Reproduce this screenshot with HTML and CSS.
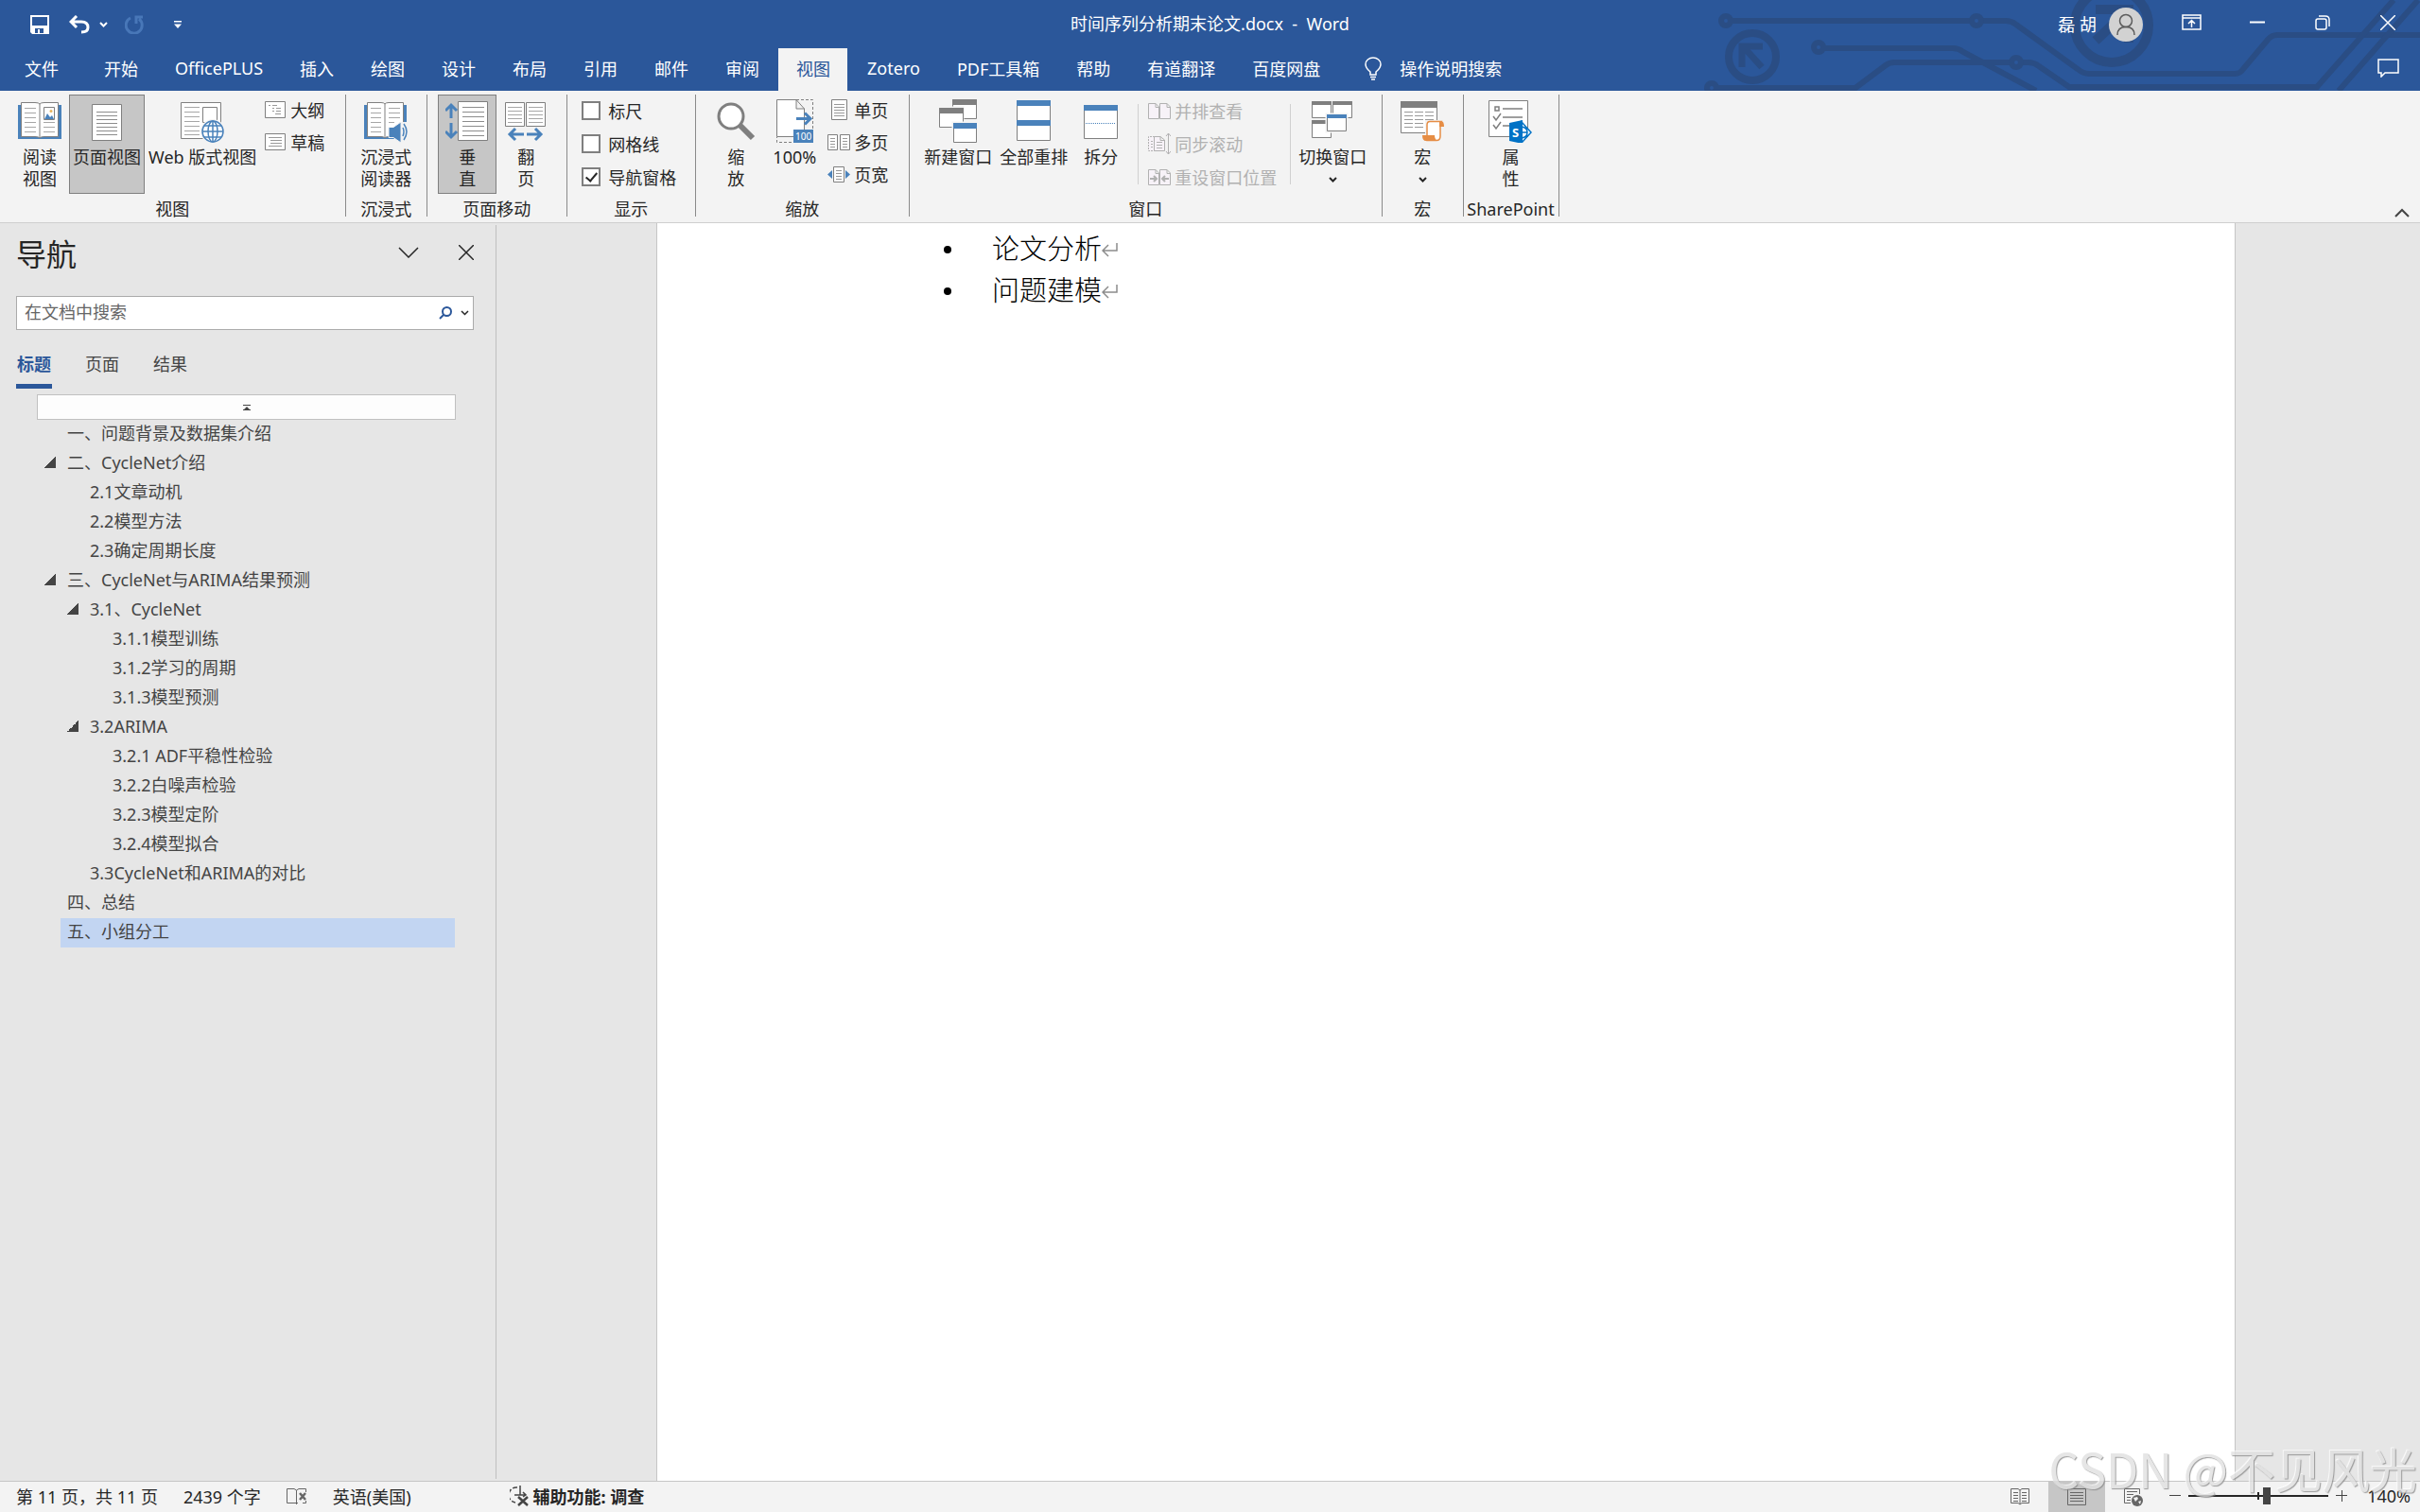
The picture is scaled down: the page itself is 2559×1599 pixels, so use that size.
FILE: index.html
```html
<!DOCTYPE html>
<html lang="zh-CN">
<head>
  <meta charset="utf-8">
  <title>时间序列分析期末论文.docx - Word</title>
  <link rel="stylesheet" href="styles.css">
</head>
<body>
  <header class="header">
    <svg class="circuit" width="760" height="96" viewBox="0 0 760 96" fill="none" stroke="#2a4d84" stroke-width="6">
      <circle cx="26" cy="22" r="5"/>
      <path d="M31 22H286M296 22H322Q328 22 333 26L398 73Q404 78 410 78H564Q570 78 573 73L599 42Q603 37 609 37H760"/>
      <circle cx="291" cy="22" r="5"/>
      <circle cx="54" cy="60" r="25" stroke-width="8"/>
      <path d="M43 71V49H65M45 50L64 71" stroke-width="7"/>
      <circle cx="124" cy="50" r="5"/>
      <path d="M129 51H266Q272 51 277 55L354 96"/>
      <circle cx="11" cy="93" r="5"/>
      <path d="M16 93H163L195 69Q199 66 204 66H328M339 66H346Q352 66 357 70L389 92H651L732 0M674 96L758 0"/>
      <circle cx="333" cy="66" r="5"/>
      <circle cx="434" cy="27" r="39" stroke-width="10"/>
      <path d="M417 10H452V45M450 12L417 43" stroke-width="10"/>
    </svg>

    <div class="titlebar">
      <div class="quick-access">
        <button title="保存"><svg width="20" height="20" viewBox="0 0 20 20"><path fill="#fff" fill-rule="evenodd" d="M0 0H20V20H2L0 18ZM2 2V11H18V2ZM5 14V19H8V15H10V19H14V14Z"/></svg></button>
        <button class="undo" title="撤消"><svg width="22" height="20" viewBox="0 0 22 20" fill="none" stroke="#fff" stroke-width="3"><path d="M8 1L2 7L8 13M3 7H13Q20 7 20 13Q20 18 13 18"/></svg></button>
        <button class="undo-more" title="更多"><svg width="9" height="6" viewBox="0 0 9 6" fill="none" stroke="#fff" stroke-width="2"><path d="M1 1L4.500 4.500L8 1"/></svg></button>
        <button class="redo" title="重复"><svg width="20" height="20" viewBox="0 0 20 20" fill="none" stroke="#4877b8" stroke-width="3"><path d="M6 3A8.500 8.500 0 1 0 15 4M12 9V2H19"/></svg></button>
        <button class="customize" title="自定义快速访问工具栏"><svg width="8" height="8" viewBox="0 0 8 8" fill="#fff"><path d="M0 0H8V1.500H0ZM0 3.500H8L4 8Z"/></svg></button>
      </div>
      <div class="doc-title">时间序列分析期末论文.docx&nbsp; -&nbsp; Word</div>
      <div class="window-controls">
        <span class="user">磊 胡</span>
        <svg class="avatar" width="36" height="36" viewBox="0 0 36 36" fill="none" stroke="#5c5c5c" stroke-width="1.500"><circle cx="18" cy="18" r="18" fill="#d2d2d2" stroke="none"/><circle cx="18" cy="14" r="6.500"/><path d="M9 29Q9 20.500 18 20.500T27 29"/></svg>
        <button class="display" title="功能区显示选项"><svg width="21" height="17" viewBox="0 0 21 17" fill="none" stroke="#fff" stroke-width="1.500"><path d="M1 1H20V16H1ZM1 4H20M10.500 14V7M7 10L10.500 6.500L14 10"/></svg></button>
        <button title="最小化"><svg width="16" height="16" viewBox="0 0 16 16"><path d="M0 7.500H16" stroke="#fff" stroke-width="2"/></svg></button>
        <button title="还原"><svg width="16" height="16" viewBox="0 0 16 16" fill="none" stroke="#fff" stroke-width="1.500"><rect x="1" y="4" width="11" height="11" rx="2"/><path d="M4 1H11Q15 1 15 5V12"/></svg></button>
        <button title="关闭"><svg width="16" height="16" viewBox="0 0 16 16"><path d="M0 0L16 16M16 0L0 16" stroke="#fff" stroke-width="1.500"/></svg></button>
      </div>
    </div>

    <nav class="tabs">
      <button class="file">文件</button>
      <button>开始</button>
      <button>OfficePLUS</button>
      <button>插入</button>
      <button>绘图</button>
      <button>设计</button>
      <button>布局</button>
      <button>引用</button>
      <button>邮件</button>
      <button>审阅</button>
      <button class="active">视图</button>
      <button>Zotero</button>
      <button>PDF工具箱</button>
      <button>帮助</button>
      <button>有道翻译</button>
      <button>百度网盘</button>
      <button class="tell-me"><svg width="18" height="25" viewBox="0 0 18 25" fill="none" stroke="#fff" stroke-width="1.500"><path d="M6 19V16Q1 12 1 8A8 7 0 0 1 17 8Q17 12 12 16V19ZM6 21.500H12M7 24H11"/></svg>操作说明搜索</button>
      <button class="comment" title="批注"><svg width="23" height="20" viewBox="0 0 23 20" fill="none" stroke="#fff" stroke-width="1.500"><path d="M1 1H22V15H8L4 19V15H1Z"/></svg></button>
    </nav>
  </header>

  <section class="ribbon">
    <div class="group">
      <div class="group-body">
        <button class="big"><svg viewBox="0 0 46 46"><path fill="#4a82bb" d="M0 6H46V42H0Z"/><path fill="#fff" stroke="#7f7f7f" d="M3.500 3.500H18Q22 3.500 23 5Q24 3.500 28 3.500H42.500V39.500H28Q24 39.500 23 41Q22 39.500 18 39.500H3.500ZM23 5V41"/><path stroke="#a6a6a6" d="M7 9.500H19M7 14.500H19M7 19.500H19M7 24.500H19M7 29.500H19M7 34.500H19M27 24.500H39M27 29.500H39M27 34.500H39"/><path fill="#fff" stroke="#7f7f7f" d="M27.500 8.500H38.500V21.500H27.500Z"/><path fill="#4a82bb" d="M28 21L31 15L34 19L36 17L38 21Z"/><circle cx="35" cy="12.500" r="1.500" fill="#e8b35a"/></svg>阅读<br>视图</button>
        <button class="big on"><svg viewBox="0 0 46 46"><path fill="#fff" stroke="#7f7f7f" d="M7.500 5.500H38.500V43.500H7.500Z"/><path stroke="#8c8c8c" d="M12 13.500H34M12 17.500H34M12 21.500H34M12 25.500H34M12 29.500H34M12 33.500H34M12 37.500H34"/></svg>页面视图</button>
        <button class="big"><svg viewBox="0 0 46 46"><path fill="#fff" stroke="#7f7f7f" d="M0.500 3.500H42.500V41.500H0.500Z"/><path stroke="#a6a6a6" d="M4 8.500H20M4 13.500H20M4 18.500H20M4 23.500H20M4 28.500H20M4 33.500H20M4 37.500H20"/><path fill="#fff" stroke="#7f7f7f" d="M23.500 8.500H38.500V24.500H23.500Z"/><circle cx="34" cy="34" r="13" fill="#f3f3f3"/><g fill="#fff" stroke="#4a82bb" stroke-width="1.500"><circle cx="34" cy="34" r="11"/><ellipse cx="34" cy="34" rx="5" ry="11"/><path d="M34 23V45M23 34H45M25 28H43M25 40H43"/></g></svg>Web 版式视图</button>
        <div class="small-col">
          <button class="small"><svg viewBox="0 0 24 24"><path fill="#fff" stroke="#7f7f7f" d="M1.500 3.500H22.500V20.500H1.500Z"/><path stroke="#999" d="M5 7.500H7M9 7.500H14M9 10.500H11M13 10.500H18M9 13.500H11M13 13.500H18M12 16.500H18"/></svg>大纲</button>
          <button class="small"><svg viewBox="0 0 24 24"><path fill="#fff" stroke="#7f7f7f" d="M1.500 3.500H22.500V20.500H1.500Z"/><path stroke="#999" d="M5 7.500H19M7 10.500H19M7 13.500H19M5 16.500H19"/></svg>草稿</button>
        </div>
      </div>
      <div class="group-label">视图</div>
    </div>

    <div class="group">
      <div class="group-body">
        <button class="big"><svg viewBox="0 0 46 46"><path fill="#4a82bb" d="M0 6H45V42H0Z"/><path fill="#fff" stroke="#7f7f7f" d="M3.500 3.500H18Q21 3.500 22 5Q23 3.500 26 3.500H41.500V39.500H26Q23 39.500 22 41Q21 39.500 18 39.500H3.500ZM22 5V41"/><path stroke="#a6a6a6" d="M7 9.500H18M7 14.500H18M7 19.500H18M7 24.500H18M7 29.500H18M7 34.500H18M26 9.500H38M26 14.500H38M26 19.500H38M26 24.500H32"/><path fill="#f3f3f3" d="M37 24H46V46H37Z"/><path fill="#4a82bb" stroke="#f3f3f3" d="M26 29.500H31L39 24V46L31 40.500H26Z"/><path fill="none" stroke="#4a82bb" stroke-width="1.500" d="M41 30Q43 34 41 39M42 26Q48 34 42 43"/></svg>沉浸式<br>阅读器</button>
      </div>
      <div class="group-label">沉浸式</div>
    </div>

    <div class="group">
      <div class="group-body">
        <button class="big on"><svg viewBox="0 0 46 46"><path fill="none" stroke="#4a82bb" stroke-width="3" d="M6 20V6M0 12L6 6L12 12M6 25V40M0 34L6 40L12 34"/><path fill="#fff" stroke="#7f7f7f" d="M13.500 2.500H44.500V43.500H13.500Z"/><path stroke="#8c8c8c" d="M18 8.500H41M18 13.500H41M18 18.500H41M18 23.500H41M18 28.500H41M18 33.500H41M18 38.500H41"/></svg>垂<br>直</button>
        <button class="big"><svg viewBox="0 0 46 46"><path fill="#fff" stroke="#7f7f7f" d="M1.500 3.500H21.500V28.500H1.500ZM23.500 3.500H43.500V28.500H23.500Z"/><path stroke="#a6a6a6" d="M4 8.500H19M4 12.500H19M4 16.500H19M4 20.500H19M4 24.500H19M26 8.500H41M26 12.500H41M26 16.500H41M26 20.500H41M26 24.500H41"/><path fill="none" stroke="#4a82bb" stroke-width="3" d="M21 37H6M12 31L6 37L12 43M24 37H39M33 31L39 37L33 43"/></svg>翻<br>页</button>
      </div>
      <div class="group-label">页面移动</div>
    </div>

    <div class="group">
      <div class="group-body">
        <div class="checks">
          <label><input type="checkbox">标尺</label>
          <label><input type="checkbox">网格线</label>
          <label><input type="checkbox" checked>导航窗格</label>
        </div>
      </div>
      <div class="group-label">显示</div>
    </div>

    <div class="group">
      <div class="group-body">
        <button class="big"><svg viewBox="0 0 46 46"><path stroke="#7f7f7f" stroke-width="6" d="M26 26L41 41"/><circle cx="18" cy="18" r="13" fill="#fff" stroke="#7f7f7f" stroke-width="3"/></svg>缩<br>放</button>
        <button class="big"><svg viewBox="0 0 46 46"><path fill="none" stroke="#7f7f7f" stroke-dasharray="3 2" d="M25 0.500H42.500V45.500H4.500V40"/><path fill="#fff" stroke="#7f7f7f" d="M4.500 0.500H25L33.500 10V39.500H4.500ZM25 0.500V10H33.500"/><path fill="none" stroke="#4a82bb" stroke-width="3" d="M25 20.500H40M34 14.500L40 20.500L34 26.500"/><path fill="#4a82bb" d="M22 32H43V46H22Z"/><text x="24" y="43" fill="#fff" font-size="10">100</text></svg>100%</button>
        <div class="small-col">
          <button class="small"><svg viewBox="0 0 24 24"><path fill="#fff" stroke="#7f7f7f" d="M4.500 1.500H20.500V22.500H4.500Z"/><path stroke="#999" d="M7 6.500H18M7 9.500H18M7 12.500H18M7 15.500H18M7 18.500H18"/></svg>单页</button>
          <button class="small"><svg viewBox="0 0 24 24"><path fill="#fff" stroke="#7f7f7f" d="M0.500 4.500H10.500V20.500H0.500ZM13.500 4.500H23.500V20.500H13.500Z"/><path stroke="#999" d="M3 8.500H8M3 11.500H8M3 14.500H8M3 17.500H8M16 8.500H21M16 11.500H21M16 14.500H21M16 17.500H21"/></svg>多页</button>
          <button class="small"><svg viewBox="0 0 24 24"><path fill="#fff" stroke="#7f7f7f" d="M6.500 4.500H17.500V20.500H6.500Z"/><path stroke="#999" d="M9 8.500H15M9 11.500H15M9 14.500H15M9 17.500H15"/><path fill="#4a82bb" d="M0 12.500L5 8V17ZM24 12.500L19 8V17Z"/></svg>页宽</button>
        </div>
      </div>
      <div class="group-label">缩放</div>
    </div>

    <div class="group">
      <div class="group-body">
        <button class="big"><svg viewBox="0 0 46 46"><g fill="#fff" stroke="#7f7f7f"><path d="M17.500 0.500H42.500V20.500H17.500Z"/><path fill="#7f7f7f" d="M17.500 0.500H42.500V5.500H17.500Z"/><path stroke="#f3f3f3" stroke-width="3" d="M3 9H28V30H3Z"/><path d="M3.500 9.500H28.500V29.500H3.500Z"/><path fill="#7f7f7f" d="M3.500 9.500H28.500V14.500H3.500Z"/><path stroke="#f3f3f3" stroke-width="3" d="M18 25H43V46H18Z"/><path d="M18.500 25.500H42.500V45.500H18.500Z"/></g><path fill="#4a82bb" d="M18 25H43V31H18Z"/></svg>新建窗口</button>
        <button class="big"><svg viewBox="0 0 46 46"><path fill="#fff" stroke="#7f7f7f" d="M5.500 1.500H40.500V43.500H5.500Z"/><path fill="#4a82bb" d="M5 1H41V7H5ZM5 22H41V28H5Z"/></svg>全部重排</button>
        <button class="big"><svg viewBox="0 0 46 46"><path fill="#fff" stroke="#7f7f7f" d="M5.500 6.500H40.500V41.500H5.500Z"/><path fill="#4a82bb" d="M5 6H41V12H5Z"/><path stroke="#4a82bb" stroke-dasharray="1 1" d="M7 25.500H39"/></svg>拆分</button>
        <div class="small-col tall ruled">
          <button class="small" disabled><svg viewBox="0 0 24 24" fill="#f7f2f8" stroke="#b1b1b1"><path d="M0.500 4.500H8L11.500 8V20.500H0.500ZM8 4.500V8.500H11.500M12.500 4.500H20L23.500 8V20.500H12.500ZM20 4.500V8.500H23.500"/></svg>并排查看</button>
          <button class="small" disabled><svg viewBox="0 0 24 24" fill="#f7f2f8" stroke="#b1b1b1"><path stroke-dasharray="2 1" d="M7 4.500H0.500V19.500H7M3 9.500H7M3 12.500H7M3 15.500H7"/><path d="M6.500 4.500H13L17.500 8V19.500H6.500ZM13 4.500V8.500H17.500M9 10.500H15M9 13.500H15M9 16.500H15M21.500 1V23M19 4L21.500 1L24 4M19 20L21.500 23L24 20"/></svg>同步滚动</button>
          <button class="small" disabled><svg viewBox="0 0 24 24" fill="#f7f2f8" stroke="#b1b1b1"><path d="M0.500 4.500H8L11.500 8V20.500H0.500ZM8 4.500V8.500H11.500M12.500 4.500H20L23.500 8V20.500H12.500ZM20 4.500V8.500H23.500"/><path fill="none" stroke-width="2" d="M2 14H9M6 11L9 14L6 17M22 14H15M18 11L15 14L18 17"/></svg>重设窗口位置</button>
        </div>
        <button class="big"><svg viewBox="0 0 46 46"><g fill="#fff" stroke="#7f7f7f"><path d="M1.500 2.500H21.500V19.500H1.500ZM23.500 2.500H43.500V19.500H23.500ZM1.500 22.500H21.500V40.500H1.500Z"/><path fill="#7f7f7f" d="M1.500 2.500H21.500V5.500H1.500ZM23.500 2.500H43.500V5.500H23.500ZM1.500 22.500H21.500V25.500H1.500Z"/><path stroke="#f3f3f3" stroke-width="3" d="M17 16H38V34H17Z"/><path d="M17.500 16.500H37.500V33.500H17.500Z"/></g><path fill="#4a82bb" d="M17 16H38V20H17Z"/></svg>切换窗口<svg class="caret" viewBox="0 0 9 6"><path fill="none" stroke="#262626" stroke-width="2" d="M1 1L4.500 4.500L8 1"/></svg></button>
      </div>
      <div class="group-label">窗口</div>
    </div>

    <div class="group">
      <div class="group-body">
        <button class="big"><svg viewBox="0 0 46 46"><path fill="#fff" stroke="#7f7f7f" d="M0.500 2.500H38.500V35.500H0.500Z"/><path fill="#7f7f7f" d="M0 2H39V9H0Z"/><path stroke="#999" stroke-dasharray="9 2" d="M4 13.500H35M4 17.500H35M4 21.500H35M4 25.500H35M4 29.500H35"/><path fill="#f3f3f3" d="M26 22H46V46H22V37H26Z"/><path fill="#fff" stroke="#e68d45" stroke-width="1.500" d="M28 39V27Q28 23.500 31 23.500H43Q42 25 42 28V39Q42 43.500 38 43.500H28Z"/><path fill="#e68d45" d="M41 23H43Q46 23 46 29H41ZM23 38H36Q36 42 39 44H27Q23 44 23 38Z"/></svg>宏<svg class="caret" viewBox="0 0 9 6"><path fill="none" stroke="#262626" stroke-width="2" d="M1 1L4.500 4.500L8 1"/></svg></button>
      </div>
      <div class="group-label">宏</div>
    </div>

    <div class="group sharepoint">
      <div class="group-body">
        <button class="big"><svg viewBox="0 0 46 46"><path fill="#fff" stroke="#7f7f7f" d="M0.500 1.500H41.500V39.500H0.500Z"/><path fill="none" stroke="#7f7f7f" stroke-width="1.500" d="M7 8H11V12H7ZM15 10H36M15 19H36M15 28H22M5 18L8 22L13 15M5 27L8 31L13 24"/><path fill="#fff" stroke="#0072c6" stroke-width="1.500" d="M35 24L45 35L35 46ZM35 29Q41 30 41 35Q41 40 35 41M35 35H41"/><path fill="#0072c6" d="M22 25L36 22V47L22 44Z"/><text x="25" y="40" fill="#fff" font-size="13" font-weight="bold">S</text></svg>属<br>性</button>
      </div>
      <div class="group-label">SharePoint</div>
    </div>
    <button class="collapse" title="折叠功能区"><svg width="16" height="10" viewBox="0 0 16 10"><path fill="none" stroke="#444" stroke-width="2" d="M1 9L8 2L15 9"/></svg></button>
  </section>

  <main class="workspace">
    <aside class="nav-pane">
      <div class="nav-head">
        <h2>导航</h2>
        <button title="任务窗格选项"><svg width="22" height="12" viewBox="0 0 22 12"><path fill="none" stroke="#262626" stroke-width="1.500" d="M1 1L11 11L21 1"/></svg></button>
        <button title="关闭"><svg width="16" height="16" viewBox="0 0 16 16"><path stroke="#262626" stroke-width="1.500" d="M0 0L16 16M16 0L0 16"/></svg></button>
      </div>
      <div class="search">
        <input type="text" placeholder="在文档中搜索" aria-label="在文档中搜索">
        <button title="搜索"><svg width="14" height="14" viewBox="0 0 14 14"><g fill="none" stroke="#2b579a" stroke-width="2"><circle cx="8.500" cy="5.500" r="4.500"/><path d="M5 9L1 13"/></g></svg></button>
        <button title="搜索选项"><svg width="9" height="6" viewBox="0 0 9 6"><path fill="none" stroke="#262626" stroke-width="1.500" d="M1 1L4.500 4.500L8 1"/></svg></button>
      </div>
      <div class="nav-tabs">
        <button class="active">标题</button>
        <button>页面</button>
        <button>结果</button>
      </div>
      <button class="jump-top" title="跳转到开头"><svg width="8" height="6" viewBox="0 0 8 6"><path fill="#444" d="M0 0H8V1H0ZM4 2L7 5H8V6H0V5H1Z"/></svg></button>
      <ul class="outline">
        <li class="l1">一、问题背景及数据集介绍</li>
        <li class="l1 open">二、CycleNet介绍</li>
        <li class="l2">2.1文章动机</li>
        <li class="l2">2.2模型方法</li>
        <li class="l2">2.3确定周期长度</li>
        <li class="l1 open">三、CycleNet与ARIMA结果预测</li>
        <li class="l2 open">3.1、CycleNet</li>
        <li class="l3">3.1.1模型训练</li>
        <li class="l3">3.1.2学习的周期</li>
        <li class="l3">3.1.3模型预测</li>
        <li class="l2 open">3.2ARIMA</li>
        <li class="l3">3.2.1 ADF平稳性检验</li>
        <li class="l3">3.2.2白噪声检验</li>
        <li class="l3">3.2.3模型定阶</li>
        <li class="l3">3.2.4模型拟合</li>
        <li class="l2">3.3CycleNet和ARIMA的对比</li>
        <li class="l1">四、总结</li>
        <li class="l1 current">五、小组分工</li>
      </ul>
    </aside>

    <div class="canvas">
      <article class="page">
        <ul>
          <li>论文分析<svg width="17" height="16" viewBox="0 0 17 16"><path fill="none" stroke="#8c8c8c" stroke-width="1.500" d="M16 1V9H1M7 3L1 9L7 15"/></svg></li>
          <li>问题建模<svg width="17" height="16" viewBox="0 0 17 16"><path fill="none" stroke="#8c8c8c" stroke-width="1.500" d="M16 1V9H1M7 3L1 9L7 15"/></svg></li>
        </ul>
      </article>
    </div>
  </main>

  <footer class="status">
    <span>第 11 页，共 11 页</span>
    <span>2439 个字</span>
    <svg width="22" height="18" viewBox="0 0 22 18" fill="none" stroke="#666"><path d="M12 16.500H0.500V1.500H8L10.500 3V18M10.500 3L13 1.500H20.500V5M20.500 14V16.500H17"/><path stroke-width="2.500" d="M14 6L20 13M20 6L14 13"/></svg>
    <span>英语(美国)</span>
    <span class="a11y"><svg width="21" height="22" viewBox="0 0 21 22" fill="none" stroke="#444" stroke-width="1.500"><path d="M8 2A8 8 0 0 0 6 18" stroke-dasharray="5 2"/><path d="M11 0V10H17M14 7L17 10L14 12M5 10H11"/><path stroke-width="2.500" d="M9 12L19 21M19 12L9 21"/></svg>辅助功能: 调查</span>
    <div class="views">
      <button title="阅读视图"><svg width="20" height="18" viewBox="0 0 20 18" fill="none" stroke="#666"><path d="M0.500 0.500H8L10 2L12 0.500H19.500V15.500H12L10 17L8 15.500H0.500ZM10 2V17M3 4.500H8M3 7.500H8M3 10.500H8M3 13.500H8M12 4.500H17M12 7.500H17M12 10.500H17M12 13.500H17"/></svg></button>
      <button class="on" title="页面视图"><svg width="20" height="18" viewBox="0 0 20 18" fill="none" stroke="#666"><path d="M0.500 0.500H19.500V17.500H0.500ZM3 4.500H17M3 7.500H17M3 10.500H17M3 13.500H17"/></svg></button>
      <button title="Web 版式视图"><svg width="20" height="19" viewBox="0 0 20 19" fill="none" stroke="#666"><path d="M7 15.500H0.500V0.500H16.500V6M3 3.500H14M3 6.500H10M3 9.500H7M3 12.500H7"/><circle cx="14" cy="13" r="6" fill="#666" stroke="none"/><path fill="#f3f3f3" stroke="none" d="M10 10L14 9L15 11L12 14ZM15 14L18 13L17 17Z"/></svg></button>
    </div>
    <button title="缩小"><svg width="12" height="12" viewBox="0 0 12 12"><path stroke="#444" d="M0 5.500H12"/></svg></button>
    <input class="zoom" type="range" min="0" max="100" value="56" aria-label="缩放">
    <button title="放大"><svg width="12" height="12" viewBox="0 0 12 12"><path stroke="#444" d="M0 5.500H12M6.500 0V12"/></svg></button>
    <button class="percent">140%</button>
  </footer>
  <div class="watermark">CSDN @不见风光</div>
</body>
</html>
```
FILE: styles.css
```css
* {
  box-sizing: border-box;
}
body {
  margin: 0;
  height: 100vh;
  display: flex;
  flex-direction: column;
  overflow: hidden;
  font-family: "Noto Sans", "Noto Sans CJK SC", sans-serif;
  font-size: 18px;
  color: #262626;
  background-color: #e6e6e6;
}
button {
  border: none;
  padding: 0;
  background: none;
  font: inherit;
  color: inherit;
  white-space: nowrap;
}
svg {
  display: block;
  flex-shrink: 0;
}
.header {
  position: relative;
  height: 96px;
  color: #fff;
  background-color: #2b579a;
  flex-shrink: 0;
}
.circuit {
  position: absolute;
  top: 0;
  right: 0;
}
.titlebar {
  position: relative;
  display: grid;
  grid-template-columns: 1fr auto 1fr;
  height: 51px;
  line-height: 50px;
}
.quick-access {
  display: flex;
  align-items: center;
  padding-left: 32px;
}
.undo {
  margin-left: 21px;
}
.undo-more {
  margin-left: 10px;
}
.redo {
  margin-left: 18px;
}
.customize {
  margin-left: 32px;
}
.window-controls {
  display: flex;
  justify-content: flex-end;
  align-items: center;
  gap: 53px;
  padding-right: 26px;
}
.window-controls button {
  padding-bottom: 4px;
}
.user {
  margin-right: -40px;
}
.avatar {
  margin-right: -12px;
}
.display {
  margin-right: -2px;
}
.tabs {
  position: relative;
  display: flex;
  gap: 2px;
  height: 45px;
}
.tabs button {
  padding: 0 18px 3px 19px;
}
.tabs .file {
  padding: 0 27px 3px 26px;
}
.tabs .active {
  color: #2b579a;
  background-color: #f3f3f3;
}
.tabs .tell-me {
  display: flex;
  align-items: center;
  gap: 19px;
  padding-left: 27px;
}
.tabs .comment {
  margin-left: auto;
  padding-right: 22px;
}
.ribbon {
  display: flex;
  height: 140px;
  border-bottom: 1px solid #cfcfcf;
  background-color: #f3f3f3;
  flex-shrink: 0;
}
.group {
  margin: 4px 0 6px;
  padding: 0 12px 0 11px;
  border-right: 1px solid #8a8a8a;
}
.sharepoint {
  padding: 0 4px 0 3px;
}
.group-body {
  display: flex;
  justify-content: center;
  height: 105px;
}
.group-label {
  padding-top: 8px;
  line-height: 16px;
  text-align: center;
}
.big {
  display: flex;
  flex-direction: column;
  align-items: center;
  min-width: 62px;
  padding: 4px 3px 0;
  border: 1px solid transparent;
  line-height: 23px;
}
.big svg {
  width: 46px;
  height: 46px;
  margin-bottom: 4px;
}
.big .caret {
  width: 9px;
  height: 6px;
  margin-top: 9px;
}
.big.on {
  border-color: #7f7f7f;
  background-color: #c6c6c6;
}
.small-col {
  margin: -1px 6px 0 0;
}
.small {
  display: flex;
  align-items: center;
  gap: 4px;
  height: 34px;
  padding: 0 4px;
}
.small svg {
  width: 24px;
  height: 24px;
}
.small:disabled {
  color: #b1b1b1;
}
.tall .small {
  height: 35px;
}
.ruled {
  height: 85px;
  margin: 10px 4px 0 8px;
  padding: 0 10px 0 6px;
  border-left: 1px solid #d0d0d0;
  border-right: 1px solid #d0d0d0;
}
.ruled .small:first-child {
  margin-top: -11px;
}
.checks {
  margin-top: -1px;
  padding: 0 8px 0 4px;
}
.checks label {
  display: flex;
  align-items: center;
  gap: 8px;
  height: 35px;
}
.checks input {
  appearance: none;
  width: 20px;
  height: 20px;
  margin: 0;
  border: 2px solid #7f7f7f;
  background-color: #fff;
}
.checks input:checked::before {
  content: "";
  display: block;
  width: 5px;
  height: 10px;
  margin: 1px 0 0 5px;
  border: solid #262626;
  border-width: 0 2px 2px 0;
  transform: rotate(40deg);
}
.collapse {
  align-self: flex-end;
  margin-left: auto;
  padding: 0 11px 5px;
}
.workspace {
  display: flex;
  flex: 1;
  min-height: 0;
}
.nav-pane {
  width: 525px;
  margin: 2px 0;
  padding: 0 23px 0 17px;
  border-right: 1px solid #c0c0c0;
  color: #444;
  flex-shrink: 0;
}
.nav-head {
  display: flex;
  align-items: center;
  gap: 42px;
  height: 75px;
  padding-bottom: 17px;
}
.nav-head h2 {
  flex-grow: 1;
  margin: 0;
  font-size: 32px;
  font-weight: normal;
  color: #262626;
}
.search {
  display: flex;
  align-items: center;
  gap: 9px;
  height: 36px;
  padding-right: 4px;
  border: 1px solid #ababab;
  background-color: #fff;
}
.search input {
  flex-grow: 1;
  padding: 0 8px 2px;
  border: none;
  font: inherit;
}
.search input::placeholder {
  color: #666;
}
.nav-tabs {
  display: flex;
  gap: 34px;
  height: 62px;
}
.nav-tabs button {
  padding: 12px 1px 0;
  border-bottom: 5px solid transparent;
}
.nav-tabs .active {
  font-weight: bold;
  color: #2b579a;
  border-color: #2b579a;
}
.jump-top {
  display: flex;
  align-items: center;
  justify-content: center;
  width: 443px;
  height: 27px;
  margin: 6px 0 0 22px;
  border: 1px solid #c0c0c0;
  background-color: #fdfdfd;
}
.outline {
  margin: 0 20px 0 47px;
  padding: 0;
  list-style: none;
  line-height: 29px;
}
.outline li {
  position: relative;
  height: 31px;
}
.l1 {
  padding-left: 7px;
}
.l2 {
  padding-left: 31px;
}
.l3 {
  padding-left: 55px;
}
.outline .open::before {
  content: "";
  position: absolute;
  top: 8px;
  left: -17px;
  width: 12px;
  height: 12px;
  background: linear-gradient(135deg, transparent 50%, #444 50%);
}
.outline .l2.open::before {
  left: 7px;
}
.outline .current {
  background-color: #c2d5f2;
}
.canvas {
  display: flex;
  flex: 1;
  padding: 0 195px 0 169px;
}
.page {
  flex: 1;
  padding: 6px 300px;
  border: solid #c6c6c6;
  border-width: 0 1px;
  background-color: #fff;
}
.page ul {
  margin: 0;
  padding: 0;
  list-style: none;
  font-family: "Liberation Serif", "Noto Sans CJK SC", serif;
  font-size: 29px;
  font-weight: 300;
  line-height: 44px;
  color: #000;
}
.page li {
  display: flex;
  align-items: center;
}
.page li::before {
  content: "";
  width: 8px;
  height: 8px;
  margin: 0 43px 0 3px;
  border-radius: 50%;
  background-color: #000;
}
.status {
  display: flex;
  align-items: center;
  height: 33px;
  gap: 27px;
  padding: 0 10px 2px 17px;
  border-top: 1px solid #c6c6c6;
  background-color: #f3f3f3;
  flex-shrink: 0;
}
.a11y {
  display: flex;
  align-items: center;
  gap: 4px;
  margin-left: 77px;
  font-weight: bold;
}
.views {
  display: flex;
  align-self: stretch;
  margin: 0 0 -2px auto;
}
.views button {
  display: flex;
  align-items: center;
  justify-content: center;
  width: 60px;
}
.views .on {
  background-color: #c6c6c6;
}
.views + button {
  margin-left: -19px;
}
.zoom {
  appearance: none;
  width: 148px;
  height: 18px;
  margin: 0 -19px;
  background: linear-gradient(#262626, #262626) 50% 50% / 2px 8px no-repeat, linear-gradient(#262626, #262626) 0 50% / 100% 2px no-repeat;
}
.zoom::-webkit-slider-thumb {
  appearance: none;
  width: 8px;
  height: 18px;
  background-color: #444;
}
.percent {
  margin-left: -6px;
}
.watermark {
  position: absolute;
  right: 3px;
  bottom: 11px;
  font-family: "Noto Sans CJK SC", sans-serif;
  font-size: 50px;
  line-height: 72px;
  color: #e0e0e0;
  opacity: 0.8;
  text-shadow: 1px 1px 1px #888, -1px -1px 1px #fff;
  pointer-events: none;
}
```
